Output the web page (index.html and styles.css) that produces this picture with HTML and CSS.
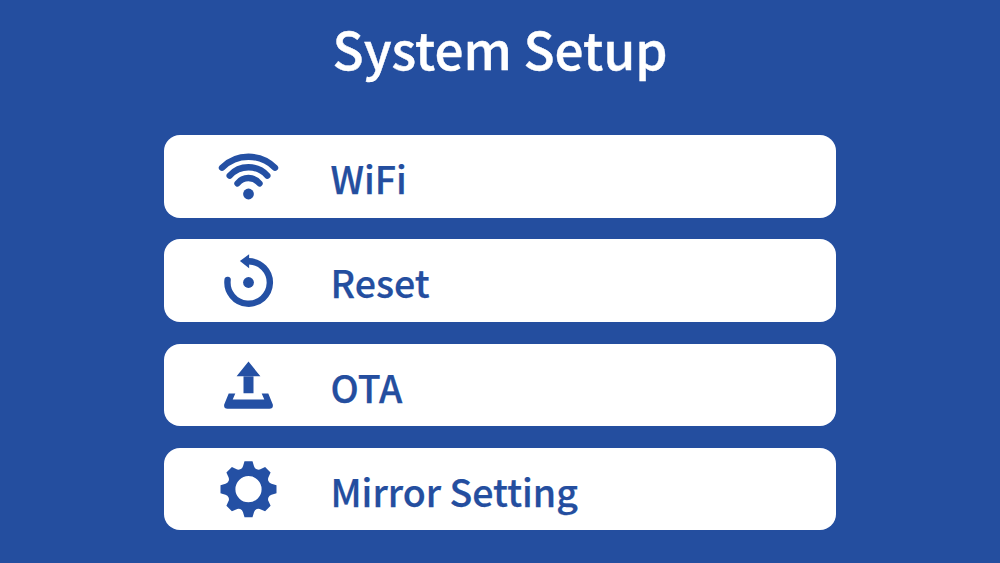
FILE: index.html
```html
<!DOCTYPE html>
<html lang="en">
<head>
<meta charset="utf-8">
<title>System Setup</title>
<link rel="stylesheet" href="styles.css">
</head>
<body>
<main class="screen">
  <h1 class="title">System Setup</h1>
  <nav class="menu">
    <a class="item">
      <svg class="icon" viewBox="-36.5 -41.2 72 82.4">
        <g class="stroke">
          <path d="M-26.5-8.5A37.6 37.6 0 0 1 26.5-8.5"/>
          <path d="M-18.8-.6A25.4 25.4 0 0 1 18.8-.6"/>
          <path d="M-11 7.2A14 14 0 0 1 11 7.2"/>
        </g>
        <circle cy="17.8" r="5.4"/>
      </svg>
      <span class="label">WiFi</span>
    </a>
    <a class="item">
      <svg class="icon" viewBox="-36.5 -41.5 72 82.4">
        <path class="stroke" d="M-20.9-.5A21.2 21.2 0 1 0 0-19.2"/>
        <path d="M-8.6-19.5L.6-26.2V-12.2Z"/>
        <circle cy="2" r="5.4"/>
      </svg>
      <span class="label">Reset</span>
    </a>
    <a class="item">
      <svg class="icon" viewBox="-36.5 -41.2 72 82.4">
        <path d="M0-23.6L11.9-8.9H-11.9ZM-5-8.6H5V8.1H-5Z"/>
        <path d="M-19.8 8.4H-13.2L-15.8 14.4H15.8L13.2 8.4H19.8L24.3 19.4Q25 23.5 21 23.5H-21Q-25 23.5-24.3 19.4Z"/>
      </svg>
      <span class="label">OTA</span>
    </a>
    <a class="item">
      <svg class="icon" viewBox="-36.5 -41.2 72 82.4">
        <path fill-rule="evenodd" d="M-5.5-23L-4-28H4L5.5-23A4.7 4.7 0 0 0 12.4-20.2L16.6-22.1 22.1-16.6 20.2-12.4A4.7 4.7 0 0 0 23-5.5L28-4V4L23 5.5A4.7 4.7 0 0 0 20.2 12.4L22.1 16.6 16.6 22.1 12.4 20.2A4.7 4.7 0 0 0 5.5 23L4 28H-4L-5.5 23A4.7 4.7 0 0 0-12.4 20.2L-16.6 22.1-22.1 16.6-20.2 12.4A4.7 4.7 0 0 0-23 5.5L-28 4V-4L-23-5.5A4.7 4.7 0 0 0-20.2-12.4L-22.1-16.6-16.6-22.1-12.4-20.2A4.7 4.7 0 0 0-5.5-23ZM-13.1 0A13.1 13.1 0 0 0 13.1 0A13.1 13.1 0 0 0-13.1 0Z"/>
      </svg>
      <span class="label">Mirror Setting</span>
    </a>
  </nav>
</main>
</body>
</html>
```
FILE: styles.css
```css
body {
  margin: 0;
  background: #244e9f;
  font-family: "Noto Sans CJK SC", "Noto Sans", sans-serif;
  font-weight: 500;
}

.screen {
  box-sizing: border-box;
  height: 563px;
  overflow: hidden;
  padding-top: 8px;
}

.title {
  margin: 0;
  height: 127.3px;
  color: #fff;
  font-size: 51.3px;
  font-weight: 500;
  line-height: 80px;
  text-align: center;
  -webkit-text-stroke: 0.4px #fff;
}

.menu {
  display: flex;
  flex-direction: column;
  gap: 21.8px;
  width: 671.6px;
  margin: 0 auto;
}

.item {
  display: flex;
  align-items: center;
  height: 82.4px;
  border-radius: 16px;
  background: #fff;
  color: #244e9f;
}

.icon {
  width: 72px;
  height: 82.4px;
  margin-left: 47.9px;
  fill: #2450a4;
}

.stroke {
  fill: none;
  stroke: #2450a4;
  stroke-width: 6.4;
  stroke-linecap: round;
}

.label {
  margin-left: 46.4px;
  padding-top: 3.4px;
  font-size: 37.5px;
  line-height: 78px;
  white-space: nowrap;
  -webkit-text-stroke: 0.25px #244e9f;
}
```
